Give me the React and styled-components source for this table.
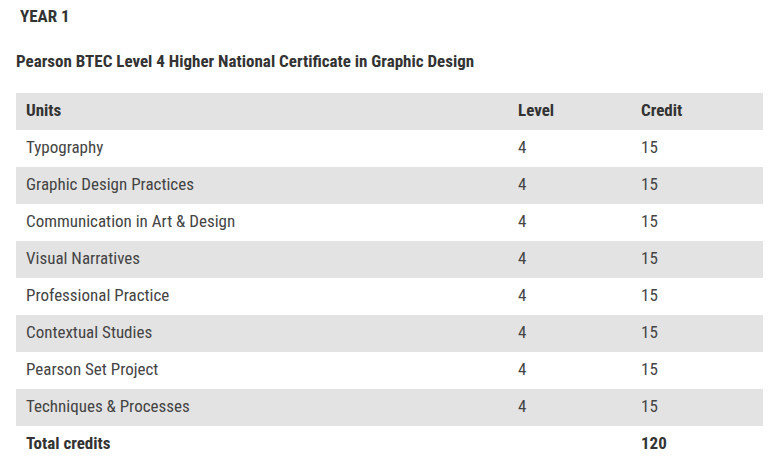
import React from "react";
import styled, { createGlobalStyle } from "styled-components";

const Global = createGlobalStyle`
  html, body { margin: 0; padding: 0; background: #fff; }
  body { font-family: "Liberation Sans Narrow", "Roboto Condensed", "DejaVu Sans Condensed", sans-serif; color: #444; }
`;

const Page = styled.div`
  padding: 5px 10px 0 16px;
`;

const YearTitle = styled.h3`
  margin: 0 0 0 4px;
  font-size: 17px;
  font-weight: 700;
  color: #333;
  line-height: 22px;
`;

const CourseTitle = styled.h4`
  margin: 23px 0 0 0;
  font-size: 17px;
  font-weight: 700;
  color: #333;
  line-height: 22px;
`;

const Table = styled.table`
  margin-top: 21px;
  width: 747px;
  border-collapse: collapse;
  font-size: 17px;
`;

const Row = styled.tr`
  height: 37px;
  background: ${(p) => (p.$shaded ? "#e3e3e3" : "#fff")};
`;

const Cell = styled.td`
  padding: 0 10px 3px 10px;
  vertical-align: middle;
  font-weight: ${(p) => (p.$bold ? 700 : 400)};
  color: ${(p) => (p.$bold ? "#333" : "#444")};
  width: ${(p) => p.$w || "auto"};
`;

const units = [
  "Typography",
  "Graphic Design Practices",
  "Communication in Art & Design",
  "Visual Narratives",
  "Professional Practice",
  "Contextual Studies",
  "Pearson Set Project",
  "Techniques & Processes",
];

export default function App() {
  return (
    <Page>
      <Global />
      <YearTitle>YEAR 1</YearTitle>
      <CourseTitle>Pearson BTEC Level 4 Higher National Certificate in Graphic Design</CourseTitle>
      <Table>
        <tbody>
          <Row $shaded>
            <Cell $bold $w="472px">Units</Cell>
            <Cell $bold $w="103px">Level</Cell>
            <Cell $bold>Credit</Cell>
          </Row>
          {units.map((u, i) => (
            <Row key={u} $shaded={i % 2 === 1}>
              <Cell>{u}</Cell>
              <Cell>4</Cell>
              <Cell>15</Cell>
            </Row>
          ))}
          <Row>
            <Cell $bold>Total credits</Cell>
            <Cell></Cell>
            <Cell $bold>120</Cell>
          </Row>
        </tbody>
      </Table>
    </Page>
  );
}
